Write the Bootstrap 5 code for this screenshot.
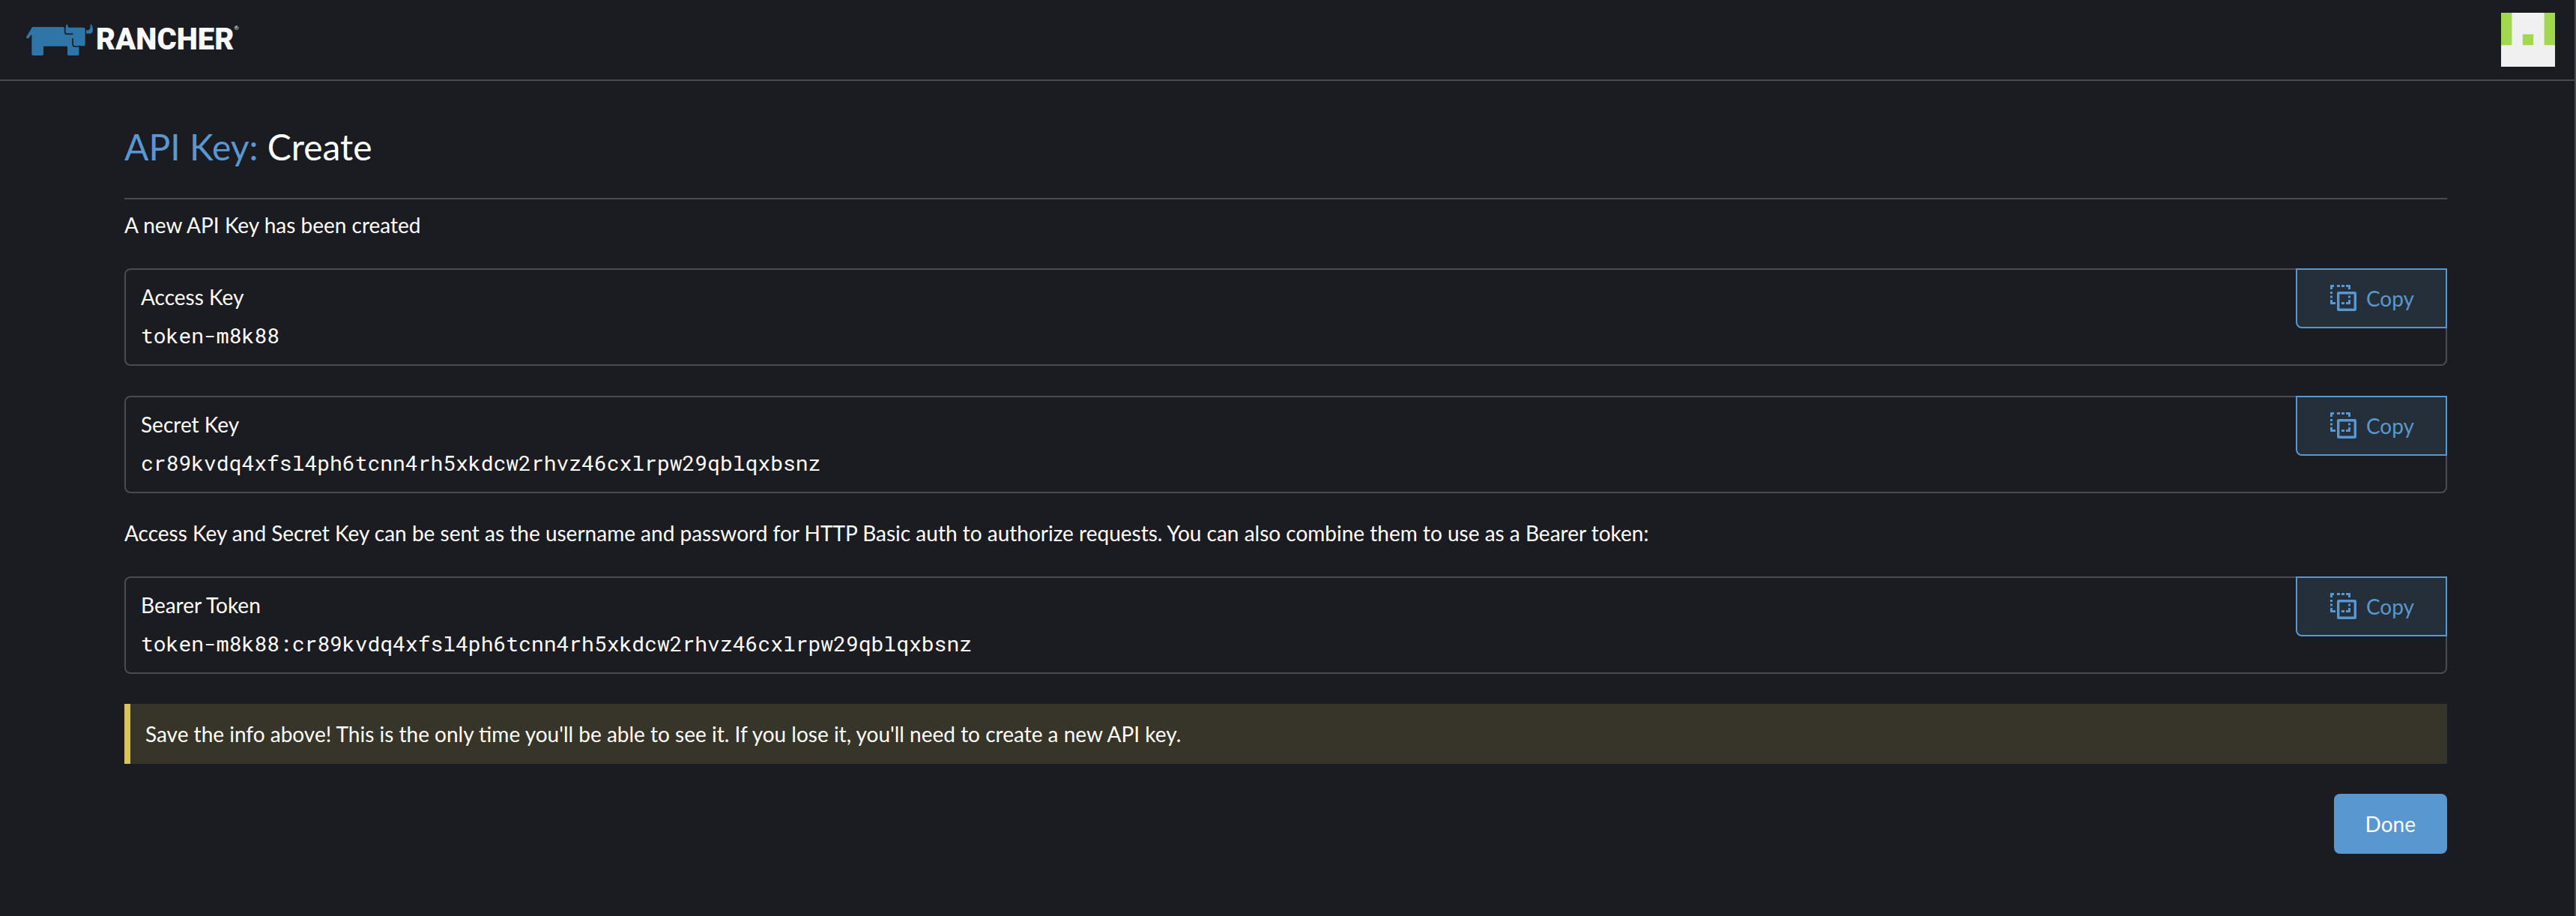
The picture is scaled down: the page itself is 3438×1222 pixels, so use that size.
<!DOCTYPE html>
<html lang="en" data-bs-theme="dark">
<head>
<meta charset="utf-8">
<meta name="viewport" content="width=device-width, initial-scale=1">
<title>API Key: Create</title>
<link href="https://cdn.jsdelivr.net/npm/bootstrap@5.3.0/dist/css/bootstrap.min.css" rel="stylesheet">
<style>
  body { background: #1b1c21; color: #fff; font: 400 28px/35px Lato, sans-serif; border-right: 2px solid #4a4b52; }
  .top-bar { height: 108px; padding: 0 26px 0 35px; border-bottom: 2px solid #4a4b52; }
  .brand-link { gap: 4px; color: #f9f9f9; }
  .brand-name { font: 900 40px/44px Roboto, sans-serif; }
  .brand-mark { font-size: 8px; line-height: 12px; margin-left: -4px; }
  .page-body { padding: 52px 170px 80px 166px; }
  .page-title { font-size: 48px; line-height: 72px; padding-bottom: 32px; margin-bottom: 17px; border-bottom: 2px solid #4a4b52; }
  .page-title span { color: #5897d0; }
  .key-box { position: relative; border: 2px solid #4a4b52; border-radius: 8px; padding: 18px 20px 20px; margin: 40px 0 36px; line-height: 36px; }
  .key-value { display: block; margin-top: 16px; color: #fff; font: 400 28px/36px "Roboto Mono", "Liberation Mono", monospace; }
  .copy-btn { position: absolute; top: -2px; right: -2px; height: 80px; padding: 0 42px 0 44px; gap: 12px; font-size: 28px; color: #5897d0; background: #252f3a; border: 2px solid #5897d0; border-radius: 0 0 0 8px; }
  .warn-banner { background: #37342a; border-left: 8px solid #dac459; padding: 22px 20px; margin: 40px 0; line-height: 36px; }
  .done-btn { height: 80px; padding: 0 42px; font-size: 28px; color: #fff; background: #5897d0; border: 0; border-radius: 8px; }
</style>
</head>
<body class="min-vh-100">
<svg width="0" height="0" class="position-absolute" aria-hidden="true">
  <symbol id="copy-icon" viewBox="0 0 36 36">
    <path fill="currentColor" d="M0 1Q0 0 1 0H5V3H3V6H0zM9 0h4v3H9zM15 0h4v3h-4zM21 0h5q1 0 1 1v5h-3V3h-3zM0 9h3v3H0zM0 14.500h3v3H0zM0 20h3v3h4v3H1q-1 0-1-1zM15 23h4v3h-4zM24 14.500h3v3h-3zM24 20h3v5q0 1-1 1h-5v-3h3z"/>
    <rect x="10.700" y="10.700" width="22.600" height="22.600" rx=".5" fill="none" stroke="currentColor" stroke-width="3.400"/>
  </symbol>
</svg>
<header class="top-bar d-flex align-items-center justify-content-between">
  <a href="#" class="brand-link d-flex align-items-center text-decoration-none">
    <svg width="89" height="42" viewBox="105 93 267 126" aria-hidden="true">
      <path fill="#3075a8" d="M132 105H250q6 0 8 4l5 2 1-8q1-7 4-10l3 6q2 4 2 8h61q7 0 7 7v59q0 8-8 8h-17v32q0 6-6 6h-34q-6 0-6-6v-31H174v31q0 6-6 6h-35q-6 0-6-6V134l-12 15q-3 3-7 1-5-2-2-7l21-34q2-4 5-4z"/>
      <path fill="#3075a8" d="M345 118q11 1 14-4 3-5 3-14 0-4 2-7l4 6q4 7 4 16 0 16-10 16h-17z"/>
      <path fill="none" stroke="#1b1c21" stroke-width="5" d="M260 105v20q0 8 9 8h23M292 150q-1 3-1 7v16q0 10 11 10h21"/>
    </svg>
    <span class="brand-name">RANCHER</span>
    <span class="brand-mark align-self-start">®</span>
  </a>
  <svg width="72" height="72" viewBox="0 0 5 5" role="img" aria-label="User avatar"><path fill="#f0f0f0" d="M0 0h5v5H0z"/><path fill="#a2d84e" d="M0 0h1v3H0zM4 0h1v3H4zM2 2h1v1H2z"/></svg>
</header>
<main class="page-body">
  <h1 class="page-title fw-normal"><span>API Key:</span> Create</h1>
  <p class="mb-0">A new API Key has been created</p>
  <section class="key-box">
    <div>Access Key</div>
    <code class="key-value">token-m8k88</code>
    <button type="button" class="btn copy-btn d-flex align-items-center"><svg width="36" height="36" aria-hidden="true"><use href="#copy-icon"/></svg>Copy</button>
  </section>
  <section class="key-box">
    <div>Secret Key</div>
    <code class="key-value">cr89kvdq4xfsl4ph6tcnn4rh5xkdcw2rhvz46cxlrpw29qblqxbsnz</code>
    <button type="button" class="btn copy-btn d-flex align-items-center"><svg width="36" height="36" aria-hidden="true"><use href="#copy-icon"/></svg>Copy</button>
  </section>
  <p class="mb-0">Access Key and Secret Key can be sent as the username and password for HTTP Basic auth to authorize requests. You can also combine them to use as a Bearer token:</p>
  <section class="key-box">
    <div>Bearer Token</div>
    <code class="key-value">token-m8k88:cr89kvdq4xfsl4ph6tcnn4rh5xkdcw2rhvz46cxlrpw29qblqxbsnz</code>
    <button type="button" class="btn copy-btn d-flex align-items-center"><svg width="36" height="36" aria-hidden="true"><use href="#copy-icon"/></svg>Copy</button>
  </section>
  <div class="warn-banner">Save the info above! This is the only time you'll be able to see it. If you lose it, you'll need to create a new API key.</div>
  <div class="d-flex justify-content-end"><button type="button" class="btn done-btn">Done</button></div>
</main>
<script src="https://cdn.jsdelivr.net/npm/bootstrap@5.3.0/dist/js/bootstrap.bundle.min.js"></script>
</body>
</html>
